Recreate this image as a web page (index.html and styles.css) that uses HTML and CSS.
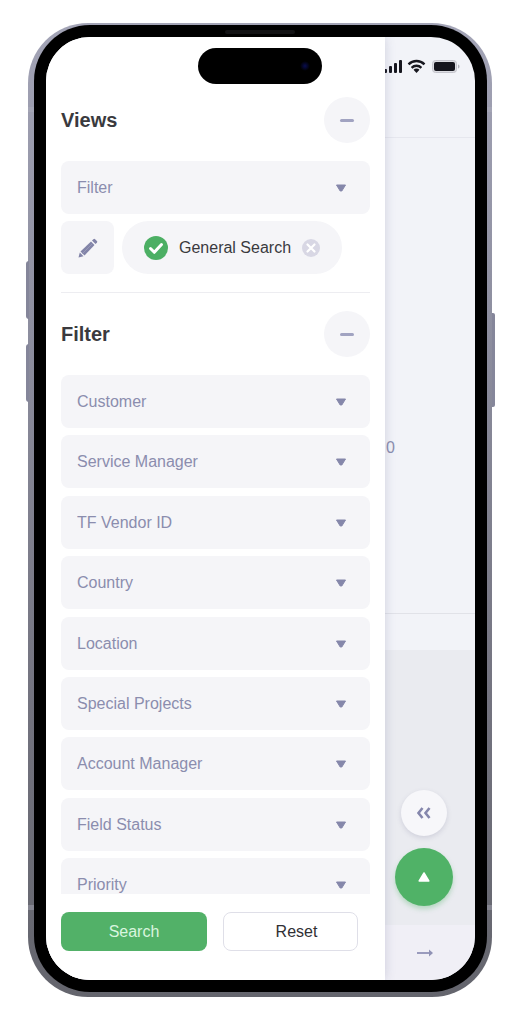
FILE: index.html
```
<!DOCTYPE html>
<html lang="en">
<head>
<meta charset="utf-8">
<meta name="viewport" content="width=device-width, initial-scale=1">
<title>Filters</title>
<link rel="stylesheet" href="styles.css">
</head>
<body>
<div class="phone">
  <span class="side-key volume-up"></span>
  <span class="side-key volume-down"></span>
  <span class="side-key power"></span>
  <span class="antenna antenna-top"></span>
  <span class="antenna antenna-bottom"></span>
  <div class="bezel">
    <span class="speaker"></span>
    <div class="screen">
      <main class="page">
        <header class="page-header">
          <svg class="status" width="76" height="18" viewBox="0 0 76 18" aria-hidden="true">
            <g fill="#17171f">
              <rect x="0" y="11" width="3" height="4" rx="1"/>
              <rect x="5" y="8" width="3" height="7" rx="1"/>
              <rect x="10" y="5" width="3" height="10" rx="1"/>
              <rect x="15" y="2" width="3" height="13" rx="1"/>
              <path d="M32.500 15l-3-3.200a4 4 0 0 1 6 0z"/>
            </g>
            <g fill="none" stroke="#17171f" stroke-width="2.400">
              <path d="M24.500 6.300a11.500 11.500 0 0 1 16 0"/>
              <path d="M27.600 9.800a7 7 0 0 1 9.800 0"/>
            </g>
            <rect x="48.500" y="2.500" width="24" height="12" rx="3" fill="#dcdce2" stroke="#c4c4cc"/>
            <rect x="50" y="4" width="21" height="9" rx="2" fill="#15151d"/>
            <path d="M74 6.500c2 .5 2 3.500 0 4z" fill="#b4b4be"/>
          </svg>
        </header>
        <section class="page-body"><span>0</span></section>
        <div class="page-strip"></div>
        <section class="page-actions">
          <button class="round collapse" type="button" aria-label="Collapse">
            <svg width="16" height="14" viewBox="0 0 16 14"><path d="M6.500 2L2.500 7l4 5M13.500 2l-4 5 4 5" fill="none" stroke="#8587ac" stroke-width="2.600"/></svg>
          </button>
          <button class="round to-top" type="button" aria-label="Back to top">
            <svg width="14" height="12" viewBox="0 0 14 12"><path d="M7 2l4.800 8H2.200z" fill="#fff" stroke="#fff" stroke-width="1.500" stroke-linejoin="round"/></svg>
          </button>
        </section>
        <footer class="page-footer">
          <button class="plain" type="button" aria-label="Next">
            <svg width="18" height="10" viewBox="0 0 18 10"><path d="M1 5h13" stroke="#9a9bbd" stroke-width="1.800"/><path d="M13 1.500L17 5l-4 3.500z" fill="#9092b5"/></svg>
          </button>
        </footer>
      </main>
      <aside class="drawer">
        <section class="views">
          <div class="section-head">
            <h2>Views</h2>
            <button class="toggle" type="button" aria-label="Collapse views"><span class="minus"></span></button>
          </div>
          <div class="field">
            <select aria-label="View filter"><option>Filter</option></select>
            <svg class="caret" width="12" height="8" viewBox="0 0 12 8"><path d="M1.500 1h9L6.800 7H5.200z"/></svg>
          </div>
          <div class="view-row">
            <button class="edit" type="button" aria-label="Edit view">
              <svg width="20" height="20" viewBox="0 0 20 20" fill="#8284a8"><path d="M.500 19.500l1.300-5 3.700 3.700z"/><path d="M2.500 13.500L13 3.500l3.500 3.500L6.500 17.500z"/><path d="M14 2.600l1.400-1.300a1.200 1.200 0 0 1 1.700 0L18.900 3a1.200 1.200 0 0 1 0 1.700L17.500 6.100z"/><path d="M3.800 16.200L14.500 5.500" stroke="#a0a2c0" stroke-width=".7"/></svg>
            </button>
            <div class="chip">
              <svg width="24" height="24" viewBox="0 0 24 24"><circle cx="12" cy="12" r="12" fill="#4caf64"/><path d="M6.500 12.500l3.800 3.800L17.500 8.500" fill="none" stroke="#fff" stroke-width="3" stroke-linecap="round" stroke-linejoin="round"/></svg>
              <span>General Search</span>
              <button class="plain" type="button" aria-label="Remove General Search">
                <svg width="18" height="18" viewBox="0 0 18 18"><circle cx="9" cy="9" r="9" fill="#d8d7e4"/><path d="M5.500 5.500l7 7m0-7l-7 7" stroke="#fff" stroke-width="2.200" stroke-linecap="round"/></svg>
              </button>
            </div>
          </div>
        </section>
        <div class="section-head filter-head">
          <h2>Filter</h2>
          <button class="toggle" type="button" aria-label="Collapse filter"><span class="minus"></span></button>
        </div>
        <div class="filter-scroll">
          <div class="filter-list">
            <div class="field"><select aria-label="Customer"><option>Customer</option></select><svg class="caret" width="12" height="8" viewBox="0 0 12 8"><path d="M1.500 1h9L6.800 7H5.200z"/></svg></div>
            <div class="field"><select aria-label="Service Manager"><option>Service Manager</option></select><svg class="caret" width="12" height="8" viewBox="0 0 12 8"><path d="M1.500 1h9L6.800 7H5.200z"/></svg></div>
            <div class="field"><select aria-label="TF Vendor ID"><option>TF Vendor ID</option></select><svg class="caret" width="12" height="8" viewBox="0 0 12 8"><path d="M1.500 1h9L6.800 7H5.200z"/></svg></div>
            <div class="field"><select aria-label="Country"><option>Country</option></select><svg class="caret" width="12" height="8" viewBox="0 0 12 8"><path d="M1.500 1h9L6.800 7H5.200z"/></svg></div>
            <div class="field"><select aria-label="Location"><option>Location</option></select><svg class="caret" width="12" height="8" viewBox="0 0 12 8"><path d="M1.500 1h9L6.800 7H5.200z"/></svg></div>
            <div class="field"><select aria-label="Special Projects"><option>Special Projects</option></select><svg class="caret" width="12" height="8" viewBox="0 0 12 8"><path d="M1.500 1h9L6.800 7H5.200z"/></svg></div>
            <div class="field"><select aria-label="Account Manager"><option>Account Manager</option></select><svg class="caret" width="12" height="8" viewBox="0 0 12 8"><path d="M1.500 1h9L6.800 7H5.200z"/></svg></div>
            <div class="field"><select aria-label="Field Status"><option>Field Status</option></select><svg class="caret" width="12" height="8" viewBox="0 0 12 8"><path d="M1.500 1h9L6.800 7H5.200z"/></svg></div>
            <div class="field"><select aria-label="Priority"><option>Priority</option></select><svg class="caret" width="12" height="8" viewBox="0 0 12 8"><path d="M1.500 1h9L6.800 7H5.200z"/></svg></div>
          </div>
        </div>
        <div class="drawer-actions">
          <button class="button primary" type="button">Search</button>
          <button class="button secondary" type="button">Reset</button>
        </div>
      </aside>
      <span class="island"><span class="lens"></span></span>
    </div>
  </div>
</div>
</body>
</html>
```
FILE: styles.css
```
* { box-sizing: border-box; }

body {
  margin: 0;
  height: 100vh;
  min-height: 900px;
  padding: 23px 26px 29px 28px;
  background: #fff;
  font-family: "Liberation Sans", Arial, sans-serif;
  font-size: 16px;
  color: #3a3a3e;
}

button, select { font: inherit; color: inherit; cursor: pointer; }
button { padding: 0; border: 0; background: none; }
svg { display: block; flex: none; }

/* Device frame */
.phone {
  position: relative;
  height: 100%;
  padding: 2px 5px 5px 6px;
  border-radius: 60px;
  background: linear-gradient(#a3a4b6, #8e8fa0 30%, #73737f 70%, #64656d);
}
.bezel {
  position: relative;
  height: 100%;
  padding: 12px;
  border-radius: 56px;
  background: #000;
}
.screen {
  position: relative;
  height: 100%;
  overflow: hidden;
  border-radius: 44px;
  background: #f2f3f8;
}
.side-key { position: absolute; width: 3px; background: #85869a; }
.volume-up { left: -2px; top: 238px; height: 58px; border-radius: 3px 0 0 3px; }
.volume-down { left: -2px; top: 321px; height: 58px; border-radius: 3px 0 0 3px; }
.power { right: -3px; top: 290px; height: 94px; border-radius: 0 2px 2px 0; }
.antenna { position: absolute; left: 0; right: 0; height: 5px; background: #aeb0bd; opacity: .4; }
.antenna-top { top: 84px; }
.antenna-bottom { bottom: 87px; }
.speaker {
  position: absolute;
  top: 5px;
  left: 50%;
  width: 70px;
  height: 4px;
  margin-left: -36px;
  border-radius: 2px;
  background: #121214;
}
.island {
  position: absolute;
  top: 11px;
  left: 50%;
  display: flex;
  align-items: center;
  justify-content: flex-end;
  width: 124px;
  height: 36px;
  margin-left: -63px;
  padding-right: 12px;
  border-radius: 18px;
  background: #000;
}
.lens {
  width: 10px;
  height: 10px;
  border-radius: 50%;
  background: radial-gradient(#090d50, #000 70%);
}

/* Page behind the drawer */
.page { display: flex; flex-direction: column; height: 100%; }
.page-header {
  display: flex;
  justify-content: flex-end;
  height: 101px;
  padding: 21px 15px 0 0;
  border-bottom: 1px solid #e6e7ee;
}
.page-body {
  display: flex;
  align-items: center;
  justify-content: flex-end;
  flex: 1;
  padding: 144px 80px 0 0;
  border-bottom: 1px solid #e1e2e8;
  color: #8c8eaf;
}
.page-strip { height: 36px; }
.page-actions {
  display: flex;
  flex-direction: column;
  align-items: flex-end;
  justify-content: flex-end;
  gap: 12px;
  height: 275px;
  padding: 0 22px 19px 0;
  background: #eaebf0;
}
.page-footer {
  display: flex;
  align-items: center;
  justify-content: flex-end;
  height: 55px;
  padding-right: 41px;
  background: #f0eff6;
}
.round { display: flex; align-items: center; justify-content: center; border-radius: 50%; }
.collapse {
  width: 46px;
  height: 46px;
  margin-right: 6px;
  background: #f7f7fa;
  box-shadow: 0 2px 5px rgba(90, 90, 130, .18);
}
.to-top {
  width: 58px;
  height: 58px;
  background: #50b267;
  box-shadow: 0 3px 5px rgba(80, 178, 103, .35);
}

/* Drawer */
.drawer {
  position: absolute;
  inset: 0 90px 0 0;
  display: flex;
  flex-direction: column;
  padding: 60px 15px 29px 15px;
  background: #fff;
  box-shadow: 0 0 10px rgba(80, 85, 130, .22);
}
.section-head { display: flex; align-items: center; justify-content: space-between; }
.section-head h2 { margin: 0; font-size: 20px; line-height: 24px; }
.toggle {
  display: flex;
  align-items: center;
  justify-content: center;
  width: 46px;
  height: 46px;
  border-radius: 50%;
  background: #f5f5f8;
}
.minus { width: 14px; height: 3px; border-radius: 2px; background: #a1a3c1; }
.views { padding-bottom: 18px; border-bottom: 1px solid #ededf1; }
.views .field { margin-top: 18px; }
.view-row { display: flex; gap: 8px; margin-top: 7px; }
.edit {
  display: flex;
  align-items: center;
  justify-content: center;
  width: 53px;
  height: 53px;
  border-radius: 8px;
  background: #f5f5f8;
}
.chip {
  display: flex;
  align-items: center;
  gap: 11px;
  height: 53px;
  padding: 0 22px;
  border-radius: 27px;
  background: #f5f5f8;
  white-space: nowrap;
}
.plain { display: block; }
.filter-head { margin-top: 18px; }
.filter-scroll { flex: 1; min-height: 0; margin-top: 18px; overflow: hidden; }
.filter-list {
  display: flex;
  flex-direction: column;
  justify-content: space-between;
  min-height: 536px;
}
.field { position: relative; height: 53px; flex: none; }
.field select {
  width: 100%;
  height: 100%;
  padding: 0 40px 0 16px;
  border: 0;
  border-radius: 8px;
  background: #f5f5f8;
  color: #8b8dae;
  appearance: none;
}
.caret {
  position: absolute;
  top: 23px;
  right: 23px;
  fill: #8587aa;
  stroke: #8587aa;
  stroke-linejoin: round;
  pointer-events: none;
}
.drawer-actions { display: grid; grid-template-columns: 146fr 135fr; gap: 16px; margin: 18px 12px 0 0; }
.button { height: 39px; border-radius: 8px; }
.primary { background: #52b168; color: #d9f5df; }
.secondary { padding-left: 12px; border: 1px solid #dfdfe8; color: #303034; }
```
